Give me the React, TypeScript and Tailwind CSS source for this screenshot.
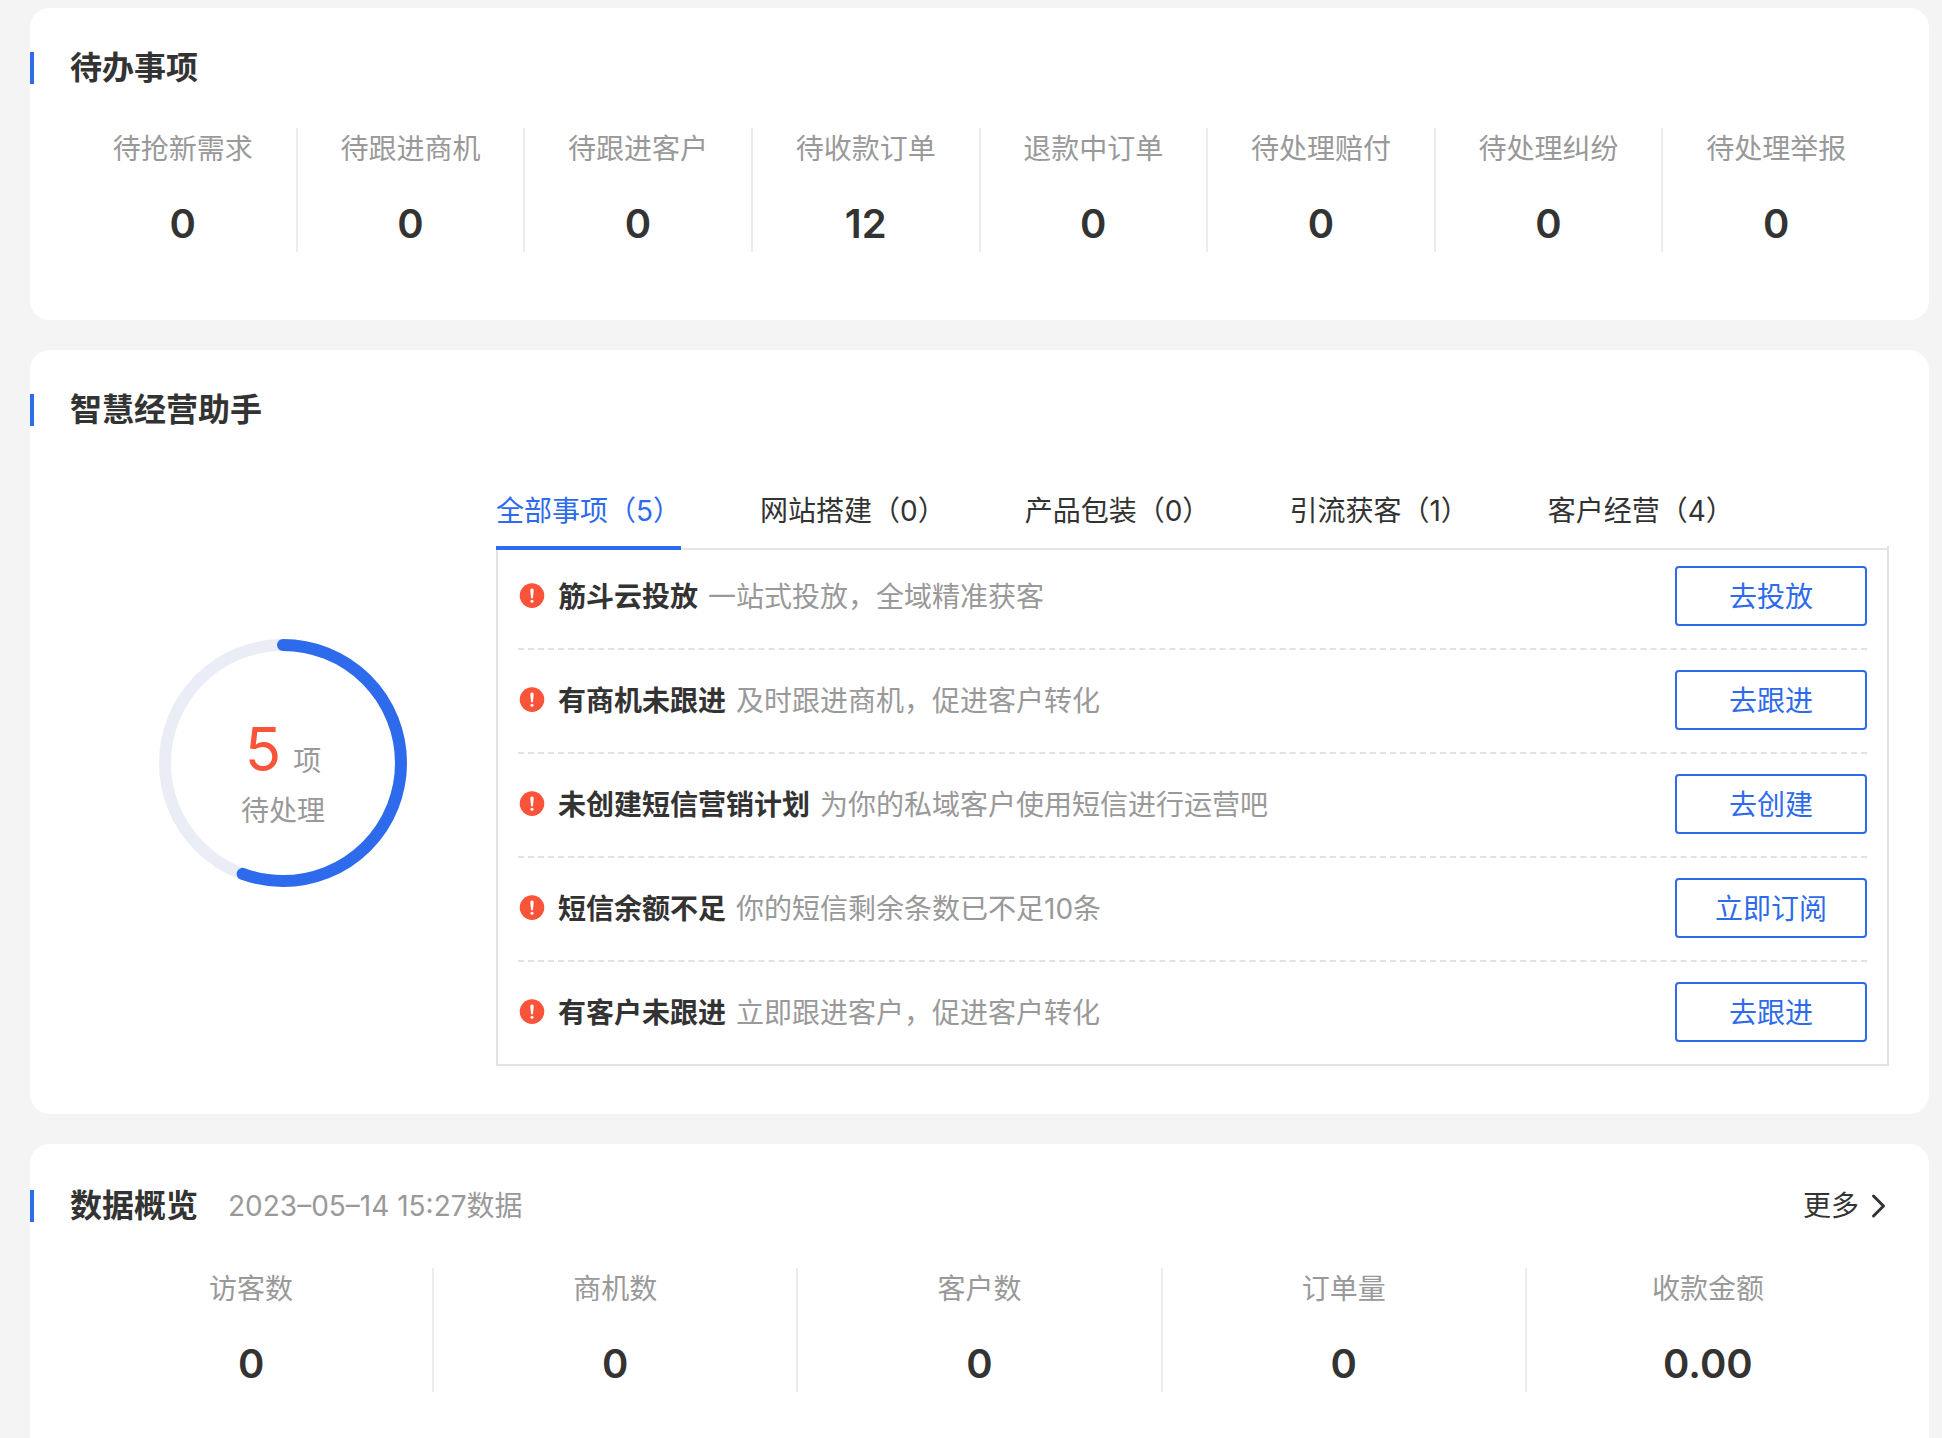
import { useState, type ReactNode } from "react";

type Stat = { label: string; value: string };

const todoStats: Stat[] = [
  { label: "待抢新需求", value: "0" },
  { label: "待跟进商机", value: "0" },
  { label: "待跟进客户", value: "0" },
  { label: "待收款订单", value: "12" },
  { label: "退款中订单", value: "0" },
  { label: "待处理赔付", value: "0" },
  { label: "待处理纠纷", value: "0" },
  { label: "待处理举报", value: "0" },
];

const overviewStats: Stat[] = [
  { label: "访客数", value: "0" },
  { label: "商机数", value: "0" },
  { label: "客户数", value: "0" },
  { label: "订单量", value: "0" },
  { label: "收款金额", value: "0.00" },
];

const tabs = ["全部事项（5）", "网站搭建（0）", "产品包装（0）", "引流获客（1）", "客户经营（4）"];

const tasks = [
  { title: "筋斗云投放", desc: "一站式投放，全域精准获客", action: "去投放" },
  { title: "有商机未跟进", desc: "及时跟进商机，促进客户转化", action: "去跟进" },
  { title: "未创建短信营销计划", desc: "为你的私域客户使用短信进行运营吧", action: "去创建" },
  { title: "短信余额不足", desc: "你的短信剩余条数已不足10条", action: "立即订阅" },
  { title: "有客户未跟进", desc: "立即跟进客户，促进客户转化", action: "去跟进" },
];

function CardTitle({ children }: { children: ReactNode }) {
  return (
    <div className="flex items-center">
      <span className="h-8 w-1 bg-[#2d6bec]" />
      <h2 className="ml-9 text-[32px] leading-8 font-bold">{children}</h2>
    </div>
  );
}

function StatCell({ label, value }: Stat) {
  return (
    <div className="flex flex-col items-center gap-[26px] border-r-2 border-[#ebecf2] last:border-transparent">
      <dt className="text-[28px] leading-[42px] text-[#999]">{label}</dt>
      <dd className="text-[40px] leading-14 font-semibold">{value}</dd>
    </div>
  );
}

function AlertIcon() {
  return (
    <svg viewBox="0 0 28 28" className="size-7 shrink-0" aria-hidden="true">
      <circle cx="14" cy="13.6" r="12.3" fill="#f9533a" />
      <path d="M12.3 8.2a1.7 1.7 0 0 1 3.4 0l-.7 7.4a1 1 0 0 1-2 0z" fill="#fff" />
      <circle cx="14" cy="19.2" r="1.5" fill="#fff" />
    </svg>
  );
}

function ProgressRing({ ratio }: { ratio: number }) {
  return (
    <div className="grid size-[248px] place-items-center">
      <svg viewBox="0 0 248 248" className="col-start-1 row-start-1 size-full" aria-hidden="true">
        <circle cx="124" cy="124" r="118" fill="none" stroke="#eaedf6" strokeWidth="12" />
        <circle
          cx="124"
          cy="124"
          r="118"
          fill="none"
          stroke="#2d6bec"
          strokeWidth="12"
          strokeLinecap="round"
          pathLength={360}
          strokeDasharray={`${ratio * 360} 360`}
          transform="rotate(-90 124 124)"
        />
      </svg>
      <div className="col-start-1 row-start-1 flex flex-col items-center pt-6 text-[28px] text-[#999]">
        <p className="flex items-baseline gap-3 leading-[60px]">
          <span className="text-[60px] text-[#f9533a]">5</span>
          <span>项</span>
        </p>
        <p className="leading-10">待处理</p>
      </div>
    </div>
  );
}

export default function App() {
  const [active, setActive] = useState(0);

  return (
    <main className="flex min-h-screen flex-col gap-[30px] bg-[#f4f4f4] pt-2 pr-[13px] pl-[30px] font-['Inter','Noto_Sans_CJK_SC',sans-serif] text-[#333]">
      <section className="rounded-[20px] bg-white pt-11 pb-[68px]">
        <CardTitle>待办事项</CardTitle>
        <dl className="mt-11 mr-[38px] ml-10 grid grid-cols-8">
          {todoStats.map((s) => (
            <StatCell key={s.label} {...s} />
          ))}
        </dl>
      </section>

      <section className="rounded-[20px] bg-white pt-11 pb-12">
        <CardTitle>智慧经营助手</CardTitle>
        <div className="mx-10 mt-[34px] flex">
          <div className="flex w-[426px] shrink-0 items-center justify-center">
            <ProgressRing ratio={5 / 9} />
          </div>
          <div className="min-w-0 flex-1">
            <div role="tablist" className="relative z-10 flex gap-[79px] border-b-2 border-[#e4e5ea]">
              {tabs.map((t, i) => (
                <button
                  key={t}
                  type="button"
                  role="tab"
                  aria-selected={i === active}
                  onClick={() => setActive(i)}
                  className={
                    i === active
                      ? "-mb-0.5 border-b-4 border-[#2d6bec] pt-[31px] pb-[15px] text-[28px] leading-10 text-[#2d6bec]"
                      : "-mb-0.5 border-b-4 border-transparent pt-[31px] pb-[15px] text-[28px] leading-10"
                  }
                >
                  {t}
                </button>
              ))}
            </div>
            <ul className="-mt-1 border-x-2 border-b-2 border-[#e2e2e2] px-5">
              {tasks.map((t) => (
                <li
                  key={t.title}
                  className="flex items-center border-b-2 border-dashed border-[#e2e2e2] pt-5 pb-[22px] text-[28px] leading-10 last:border-b-0"
                >
                  <AlertIcon />
                  <span className="ml-3 pt-0.5 font-bold">{t.title}</span>
                  <span className="ml-2.5 pt-0.5 text-[#999]">{t.desc}</span>
                  <button
                    type="button"
                    className="ml-auto h-[60px] w-48 shrink-0 rounded border-2 border-[#2d6bec] pt-0.5 text-[#2d6bec]"
                  >
                    {t.action}
                  </button>
                </li>
              ))}
            </ul>
          </div>
        </div>
      </section>

      <section className="flex-1 rounded-t-[20px] bg-white pt-11 pb-11">
        <div className="flex h-9 items-center">
          <CardTitle>数据概览</CardTitle>
          <span className="ml-[30px] text-[28px] leading-9 text-[#999]">2023–05–14 15:27数据</span>
          <a href="#more" className="mr-[38px] ml-auto flex items-center gap-2 text-[28px] leading-9">
            更多
            <svg viewBox="0 0 24 28" className="h-7 w-6" fill="none" stroke="#333" strokeWidth="3" strokeLinecap="round" strokeLinejoin="round" aria-hidden="true">
              <path d="M6.5 4 16.5 14 6.5 24" />
            </svg>
          </a>
        </div>
        <dl className="mt-11 mr-[38px] ml-10 grid grid-cols-5">
          {overviewStats.map((s) => (
            <StatCell key={s.label} {...s} />
          ))}
        </dl>
      </section>
    </main>
  );
}
